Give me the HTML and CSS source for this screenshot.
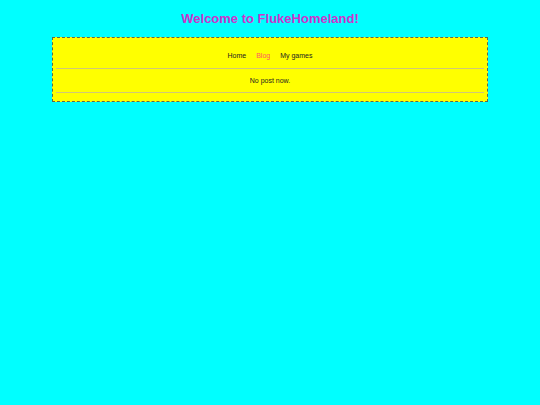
FILE: index.html
```html
<!DOCTYPE html>
<html>
<head>
<meta charset="utf-8">
<link rel="stylesheet" href="styles.css">
</head>
<body>
<h1 class="title">Welcome to FlukeHomeland!</h1>
<div class="box">
  <nav class="nav">
    <a class="nav-link" href="#">Home</a>
    <a class="nav-link active" href="#">Blog</a>
    <a class="nav-link" href="#">My games</a>
  </nav>
  <div class="rule"></div>
  <div class="content">No post now.</div>
  <div class="rule"></div>
</div>
</body>
</html>
```
FILE: styles.css
```css
html, body {
  margin: 0;
  padding: 0;
}
body {
  background: #00ffff;
  font-family: "Comic Sans MS", "Liberation Sans", sans-serif;
  color: #222222;
}
.title {
  margin: 0;
  padding-top: 11px;
  height: 37px;
  box-sizing: border-box;
  text-align: center;
  font-size: 13px;
  font-weight: bold;
  color: #cc33cc;
  line-height: 16px;
}
.box {
  margin: 0 52px;
  background: #ffff00;
  border: 1px dashed #5a6a50;
  padding: 0 3px 8px;
}
.nav {
  height: 30px;
  box-sizing: border-box;
  display: flex;
  justify-content: center;
  align-items: center;
  gap: 10px;
  font-size: 7px;
  padding-top: 4px;
}
.nav-link {
  color: #222222;
  text-decoration: none;
}
.nav-link.active {
  color: #ff5566;
}
.rule {
  height: 1px;
  background: #d0c878;
}
.content {
  height: 23px;
  display: flex;
  justify-content: center;
  align-items: center;
  font-size: 7px;
}
```
